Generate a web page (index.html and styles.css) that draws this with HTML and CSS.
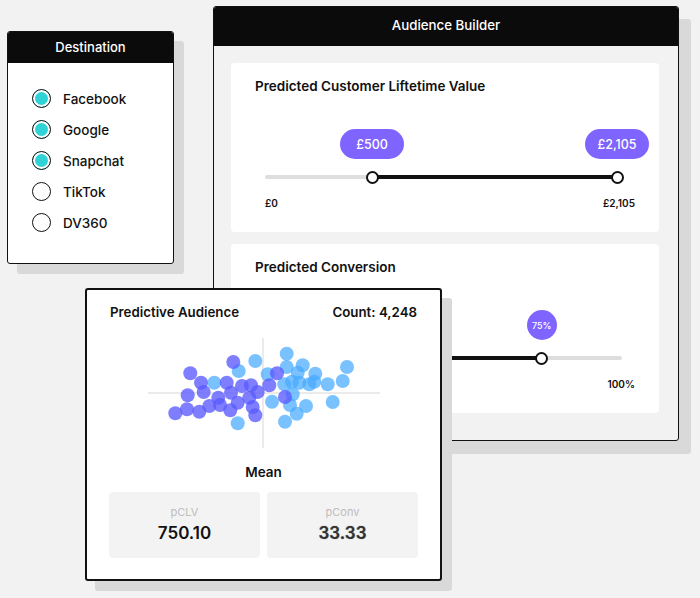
FILE: index.html
```html
<!DOCTYPE html>
<html>
<head>
<meta charset="utf-8">
<link rel="stylesheet" href="styles.css">
</head>
<body>
<div class="canvas">

  <section class="window builder">
    <header class="win-head win-head-lg">Audience Builder</header>
    <div class="builder-body">
      <div class="panel">
        <h3 class="panel-title">Predicted Customer Liftetime Value</h3>
        <div class="range">
          <div class="range-bubbles">
            <span class="pill" style="left:30%">£500</span>
            <span class="pill" style="left:98.6%">£2,105</span>
          </div>
          <div class="track">
            <span class="fill" style="left:30%;width:68.6%"></span>
            <span class="thumb" style="left:30%"></span>
            <span class="thumb" style="left:98.6%"></span>
          </div>
          <div class="range-labels"><span>£0</span><span>£2,105</span></div>
        </div>
      </div>
      <div class="panel">
        <h3 class="panel-title">Predicted Conversion</h3>
        <div class="range">
          <div class="range-bubbles">
            <span class="dot-bubble" style="left:77.5%">75%</span>
          </div>
          <div class="track">
            <span class="fill" style="left:0;width:77.5%"></span>
            <span class="thumb" style="left:77.5%"></span>
          </div>
          <div class="range-labels"><span>0%</span><span>100%</span></div>
        </div>
      </div>
    </div>
  </section>

  <section class="window destination">
    <header class="win-head">Destination</header>
    <ul class="radio-list">
      <li class="radio-row"><span class="radio on"></span>Facebook</li>
      <li class="radio-row"><span class="radio on"></span>Google</li>
      <li class="radio-row"><span class="radio on"></span>Snapchat</li>
      <li class="radio-row"><span class="radio"></span>TikTok</li>
      <li class="radio-row"><span class="radio"></span>DV360</li>
    </ul>
  </section>

  <section class="window audience">
    <div class="aud-head">
      <span>Predictive Audience</span>
      <span>Count: 4,248</span>
    </div>
    <svg class="scatter" width="232" height="110" viewBox="0 0 232 110">
      <line x1="0" y1="55" x2="232" y2="55" stroke="#e4e4e4" stroke-width="1.5"/>
      <line x1="115" y1="0" x2="115" y2="110" stroke="#e4e4e4" stroke-width="1.5"/>
      <g fill="rgb(70,170,255)" fill-opacity="0.72">
        <circle cx="90.7" cy="33" r="7"/>
        <circle cx="107.3" cy="23" r="7"/>
        <circle cx="66.3" cy="44.7" r="7"/>
        <circle cx="89.7" cy="85.3" r="7"/>
        <circle cx="119.7" cy="36.3" r="7"/>
        <circle cx="124" cy="63.7" r="7"/>
        <circle cx="138.7" cy="15.7" r="7"/>
        <circle cx="138.7" cy="29" r="7"/>
        <circle cx="154.7" cy="27.3" r="7"/>
        <circle cx="149.7" cy="34.7" r="7"/>
        <circle cx="136.3" cy="46.3" r="7"/>
        <circle cx="144" cy="43.7" r="7"/>
        <circle cx="151.3" cy="44.7" r="7"/>
        <circle cx="161.3" cy="46.3" r="7"/>
        <circle cx="167.3" cy="35.7" r="7"/>
        <circle cx="166.3" cy="43.7" r="7"/>
        <circle cx="179.7" cy="46.3" r="7"/>
        <circle cx="194.7" cy="43" r="7"/>
        <circle cx="199" cy="29" r="7"/>
        <circle cx="184.7" cy="64" r="7"/>
        <circle cx="158" cy="68" r="7"/>
        <circle cx="148.7" cy="75.7" r="7"/>
        <circle cx="142" cy="67" r="7"/>
        <circle cx="144.7" cy="56.3" r="7"/>
        <circle cx="137" cy="83.7" r="7"/>
      </g>
      <g fill="rgb(90,90,255)" fill-opacity="0.78">
        <circle cx="42.3" cy="35.3" r="7"/>
        <circle cx="85.3" cy="24" r="7"/>
        <circle cx="53" cy="44.7" r="7"/>
        <circle cx="55.7" cy="54" r="7"/>
        <circle cx="39.7" cy="57.3" r="7"/>
        <circle cx="27.3" cy="75.3" r="7"/>
        <circle cx="39" cy="71.3" r="7"/>
        <circle cx="51.3" cy="73.7" r="7"/>
        <circle cx="61.3" cy="68" r="7"/>
        <circle cx="70.3" cy="59.7" r="7"/>
        <circle cx="72" cy="67" r="7"/>
        <circle cx="78.7" cy="44.7" r="7"/>
        <circle cx="83" cy="54.7" r="7"/>
        <circle cx="82.3" cy="72.3" r="7"/>
        <circle cx="89.7" cy="64.7" r="7"/>
        <circle cx="94" cy="48" r="7"/>
        <circle cx="103" cy="47.3" r="7"/>
        <circle cx="101.3" cy="59.7" r="7"/>
        <circle cx="109.7" cy="54" r="7"/>
        <circle cx="104.7" cy="69" r="7"/>
        <circle cx="107.3" cy="77.3" r="7"/>
        <circle cx="121.3" cy="47.3" r="7"/>
        <circle cx="129" cy="35.3" r="7"/>
        <circle cx="137" cy="59" r="7"/>
      </g>
    </svg>
    <div class="mean">Mean</div>
    <div class="stats">
      <div class="stat"><span class="stat-label">pCLV</span><span class="stat-value">750.10</span></div>
      <div class="stat"><span class="stat-label">pConv</span><span class="stat-value soft">33.33</span></div>
    </div>
  </section>

</div>
</body>
</html>
```

FILE: styles.css
```css
* { box-sizing: border-box; }
html, body { margin: 0; padding: 0; }
body {
  background: #f2f2f2;
  font-family: Inter, "Noto Sans", "Liberation Sans", sans-serif;
  color: #111;
  -webkit-font-smoothing: antialiased;
}
.canvas {
  position: relative;
  width: 700px;
  height: 598px;
  overflow: hidden;
}
.window {
  position: absolute;
  border: 1.5px solid #111;
  border-radius: 3px;
  background: #fff;
  overflow: hidden;
}
.win-head {
  background: #0b0b0b;
  color: #fff;
  text-align: center;
  font-size: 13px;
  font-weight: 500;
  height: 31px;
  line-height: 30px;
}
.win-head-lg { height: 39px; line-height: 37px; font-size: 13.3px; }

/* Destination */
.destination {
  left: 7px; top: 31px; width: 167px; height: 233px;
  box-shadow: 10px 10px 0 #d9d9d9;
  overflow: visible;
}
.destination .win-head { border-radius: 2px 2px 0 0; }
.radio-list {
  list-style: none;
  margin: 0;
  padding: 20px 0 0 24px;
}
.radio-row {
  display: flex;
  align-items: center;
  gap: 12px;
  height: 31px;
  font-size: 13.5px;
  font-weight: 500;
}
.radio {
  width: 19px; height: 19px;
  border: 1.5px solid #111;
  border-radius: 50%;
  background: #fff;
  display: inline-block;
  flex: none;
}
.radio.on {
  background: #2fd3d6;
  box-shadow: inset 0 0 0 2px #fff;
}

/* Builder */
.builder {
  left: 213px; top: 6px; width: 466px; height: 435px;
  background: #f2f2f2;
  box-shadow: 12px 13px 0 #d9d9d9;
  overflow: visible;
}
.builder .win-head { border-radius: 2px 2px 0 0; }
.builder-body {
  display: flex;
  flex-direction: column;
  gap: 12px;
  padding: 17px 19px 0 17px;
}
.panel {
  background: #fff;
  border-radius: 4px;
  height: 169px;
  padding: 14px 24px 0 24px;
}
.panel-title {
  margin: 0;
  font-size: 13.5px;
  font-weight: 600;
  line-height: 18px;
}
.range { margin-left: 10px; margin-top: 34px; }
.range-bubbles { position: relative; height: 30px; margin-right: 13px; }
.pill {
  position: absolute; top: 0;
  transform: translateX(-50%);
  height: 30px; width: 64px;
  border-radius: 15px;
  background: #8064ff;
  color: #fff;
  font-size: 12.5px; font-weight: 500;
  display: flex; align-items: center; justify-content: center;
}
.dot-bubble {
  position: absolute; top: 0;
  transform: translateX(-50%);
  width: 30px; height: 30px; border-radius: 50%;
  background: #8064ff; color: #fff;
  font-size: 9px; font-weight: 500;
  display: flex; align-items: center; justify-content: center;
}
.track {
  position: relative;
  height: 4px;
  margin: 16px 13px 0 0;
  background: #dedede;
  border-radius: 2px;
}
.fill {
  position: absolute; top: 0; height: 4px;
  background: #111;
}
.thumb {
  position: absolute; top: 50%;
  width: 13px; height: 13px;
  margin: -6.5px 0 0 -6.5px;
  border: 2px solid #111;
  border-radius: 50%;
  background: #fff;
}
.range-labels {
  display: flex;
  justify-content: space-between;
  margin-top: 17px;
  font-size: 10px;
  font-weight: 600;
  line-height: 14px;
}

/* Audience */
.audience {
  left: 85px; top: 288px; width: 357px; height: 293px;
  border-width: 2px;
  box-shadow: 10px 10px 0 #d9d9d9;
  display: flex;
  flex-direction: column;
  align-items: center;
  padding: 13px 22px 0 22px;
  overflow: visible;
}
.aud-head {
  align-self: stretch;
  display: flex;
  justify-content: space-between;
  padding: 0 1px 0 1px;
  font-size: 13.3px;
  font-weight: 600;
  line-height: 18px;
}
.scatter { display: block; margin-top: 17px; }
.mean {
  margin-top: 15px;
  font-size: 13.5px;
  font-weight: 600;
  line-height: 18px;
}
.stats {
  align-self: stretch;
  display: grid;
  grid-template-columns: 1fr 1fr;
  gap: 7px;
  margin-top: 11px;
}
.stat {
  background: #f3f3f3;
  border-radius: 4px;
  height: 66px;
  display: flex;
  flex-direction: column;
  align-items: center;
  padding-top: 13px;
}
.stat-label { font-size: 11px; color: #bdbdbd; line-height: 14px; }
.stat-value { font-size: 17px; font-weight: 600; line-height: 22px; margin-top: 3px; }
.stat-value.soft { color: #333; text-shadow: 0 0 1px rgba(0,0,0,0.5); }
```
